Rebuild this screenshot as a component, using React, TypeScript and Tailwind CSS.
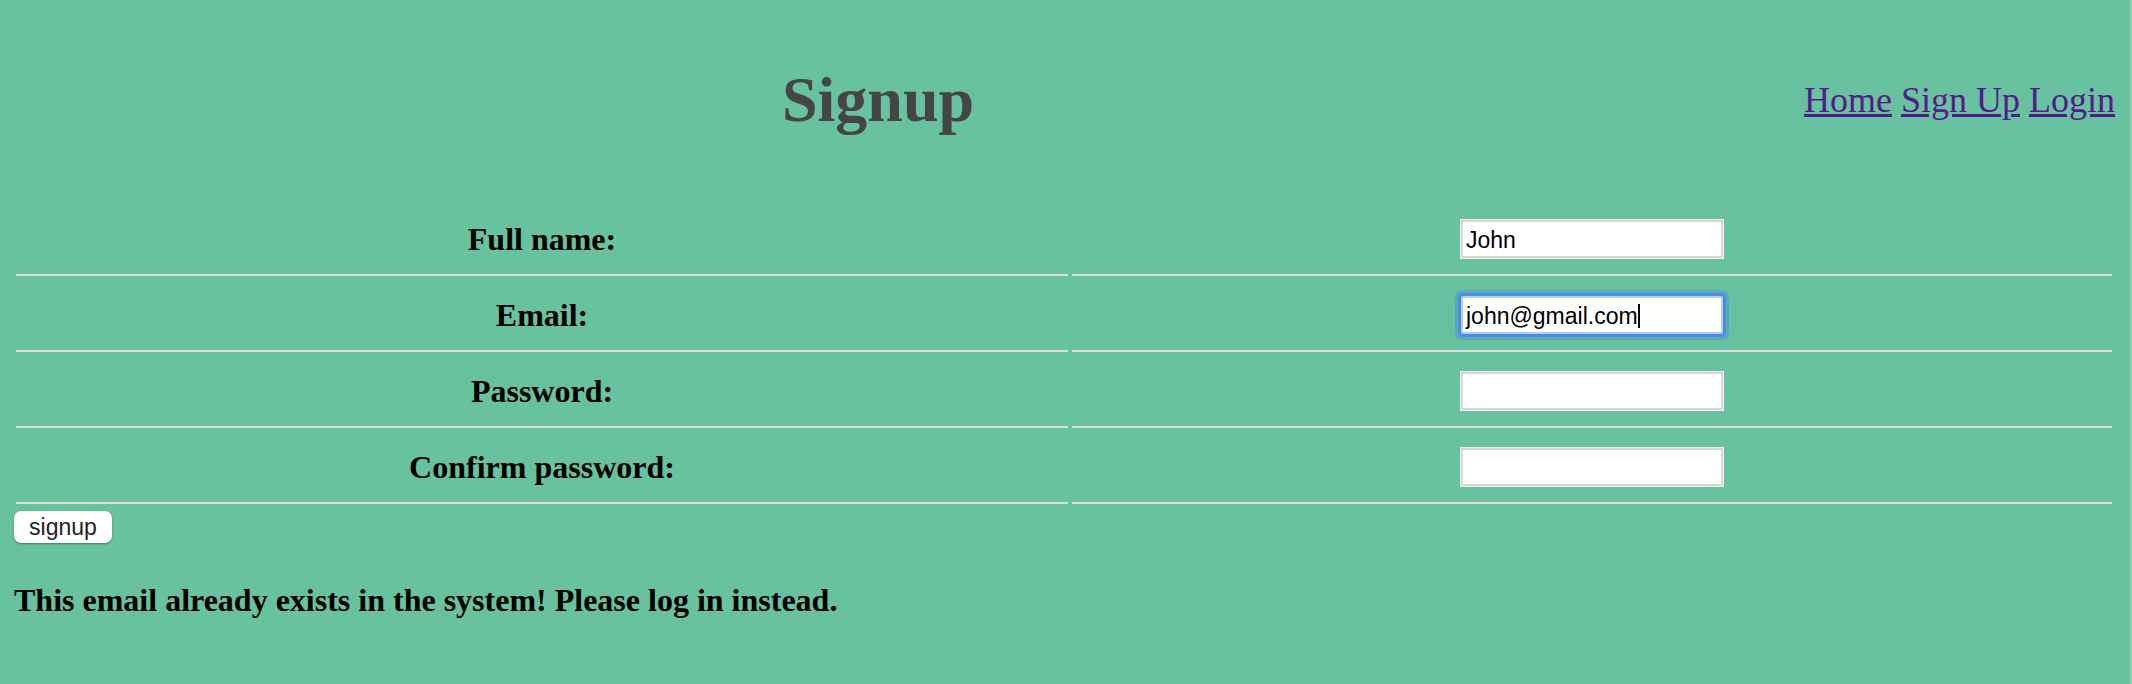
import React from 'react';

const rows = [
    { label: 'Full name:', value: 'John', focused: false },
    { label: 'Email:', value: 'john@gmail.com', focused: true },
    { label: 'Password:', value: '', focused: false },
    { label: 'Confirm password:', value: '', focused: false },
];

export default function App() {
    return (
        <div className="flex w-full h-[684px] bg-[#68c19f] font-['Liberation_Serif',serif] text-black">
            <div className="flex flex-col flex-1">
                {/* Header */}
                <div className="flex items-center h-[200px]">
                    <h1 className="w-[1756px] text-center text-[64px] font-bold leading-normal text-[#454545]">Signup</h1>
                    <nav className="ml-auto pr-[15px] text-[36px] leading-normal text-[#551a8b]">
                        <a href="#" className="underline">Home</a>{' '}
                        <a href="#" className="underline">Sign Up</a>{' '}
                        <a href="#" className="underline">Login</a>
                    </nav>
                </div>

                {/* Form table */}
                <div className="grid grid-cols-[1052px_1040px] gap-[4px] pl-[16px] pt-[4px]">
                    {rows.map((row) => (
                        <React.Fragment key={row.label}>
                            <div className="h-[72px] border-b-2 border-[#dcdcdc] flex items-center justify-center text-[32px] font-bold">
                                {row.label}
                            </div>
                            <div className="h-[72px] border-b-2 border-[#dcdcdc] flex items-center justify-center">
                                {row.focused ? (
                                    <div className="w-[262px] h-[38px] pt-[2px] bg-white border-2 border-[#b3cdf3] rounded-[2px] shadow-[0_0_0_3px_#4a8ee0,0_0_0_6px_rgba(74,142,224,0.45)] flex items-center px-[3px] font-['Liberation_Sans',Arial,sans-serif] text-[23px] text-black">
                                        <span>{row.value}</span>
                                        <span className="inline-block w-[2px] h-[24px] bg-black" />
                                    </div>
                                ) : (
                                    <input
                                        type={row.label.startsWith('Full') ? 'text' : 'password'}
                                        defaultValue={row.value}
                                        readOnly
                                        className="w-[262px] h-[38px] pt-[2px] bg-white border-2 border-[#d6d6d6] outline outline-1 outline-[#f2f2f2] px-[3px] font-['Liberation_Sans',Arial,sans-serif] text-[23px] text-black"
                                    />
                                )}
                            </div>
                        </React.Fragment>
                    ))}
                </div>

                <div className="pl-[14px] pt-[7px]">
                    <button className="w-[98px] h-[32px] bg-white rounded-[7px] shadow-[0_1px_2px_rgba(0,0,0,0.4)] font-['Liberation_Sans',Arial,sans-serif] text-[23px] leading-none text-[#222]">
                        signup
                    </button>
                </div>

                <p className="pl-[14px] mt-[33px] text-[32px] font-bold leading-normal">
                    This email already exists in the system! Please log in instead.
                </p>
            </div>
            <div className="w-[2px] bg-[#8fd2b7]" />
        </div>
    );
}
